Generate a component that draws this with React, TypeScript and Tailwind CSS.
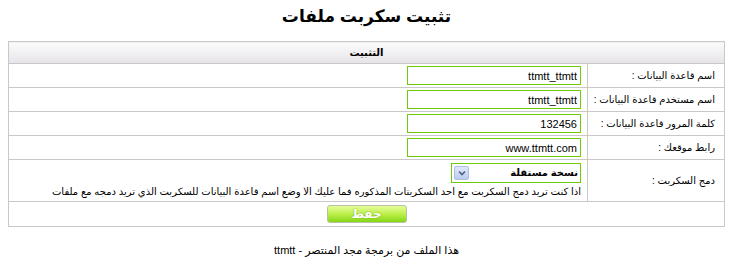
import { useState } from 'react';

const font = "font-['Tahoma','Liberation_Sans','DejaVu_Sans',sans-serif]";

export default function App() {
  const [dbName, setDbName] = useState('ttmtt_ttmtt');
  const [dbUser, setDbUser] = useState('ttmtt_ttmtt');
  const [dbPass, setDbPass] = useState('132456');
  const [siteUrl, setSiteUrl] = useState('www.ttmtt.com');
  const [merge, setMerge] = useState('standalone');

  const rows = [
    { label: 'اسم قاعدة البيانات :', value: dbName, set: setDbName },
    { label: 'اسم مستخدم قاعدة البيانات :', value: dbUser, set: setDbUser },
    { label: 'كلمة المرور قاعدة البيانات :', value: dbPass, set: setDbPass },
    { label: 'رابط موقعك :', value: siteUrl, set: setSiteUrl },
  ];

  return (
    <div dir="rtl" className={`w-[733px] h-[266px] bg-white text-black ${font}`}>
      <h1 className="text-center text-[17px] font-bold leading-none pt-[8px] h-[41px]">
        تثبيت سكربت ملفات
      </h1>

      {/* install form */}
      <table className="mx-auto w-[717px] table-fixed border-collapse border border-[#c8c8c8] text-[10px]">
        <colgroup>
          <col className="w-[137px]" />
          <col />
        </colgroup>
        <thead>
          <tr>
            <th
              colSpan={2}
              className="h-[22px] border border-[#c8c8c8] bg-gradient-to-b from-[#fbfbfc] to-[#e6e4e8] text-[10px] font-bold"
            >
              التثبيت
            </th>
          </tr>
        </thead>
        <tbody>
          {rows.map((r) => (
            <tr key={r.label} className="h-[24px]">
              <td className="whitespace-nowrap border border-[#c8c8c8] pr-[9px] text-right">{r.label}</td>
              <td className="border border-[#c8c8c8] pr-[6px]">
                <input
                  dir="ltr"
                  value={r.value}
                  onChange={(e) => r.set(e.target.value)}
                  className="block w-[174px] h-[19px] border border-[#6ccb0a] px-[3px] text-right text-[11px] outline-none"
                />
              </td>
            </tr>
          ))}
          <tr className="h-[42px]">
            <td className="whitespace-nowrap border border-[#c8c8c8] pr-[9px] text-right">دمج السكربت :</td>
            <td className="border border-[#c8c8c8] pr-[6px] pl-[6px] py-[2px]">
              <div className="relative w-[130px] h-[20px] border border-[#6ccb0a]">
                <select
                  value={merge}
                  onChange={(e) => setMerge(e.target.value)}
                  className="w-full h-full appearance-none bg-white pr-[2px] text-[10px] font-bold outline-none"
                >
                  <option value="standalone">نسخة مستقلة</option>
                </select>
                <span className="pointer-events-none absolute left-[2px] top-[2px] flex w-[15px] h-[14px] items-center justify-center rounded-[2px] border border-[#aebfe0] bg-gradient-to-b from-[#e1e9fb] to-[#bccbf0]">
                  <svg width="8" height="6" viewBox="0 0 8 6">
                    <path d="M1 1.5 L4 4.5 L7 1.5" stroke="#4d6185" strokeWidth="1.6" fill="none" />
                  </svg>
                </span>
              </div>
              <div className="mt-[1px] whitespace-nowrap leading-[15px]">
                اذا كنت تريد دمج السكربت مع احد السكربتات المذكوره فما عليك الا وضع اسم قاعدة البيانات للسكربت الذي تريد دمجه مع ملفات
              </div>
            </td>
          </tr>
          <tr className="h-[25px]">
            <td colSpan={2} className="border border-[#c8c8c8]">
              <div className="flex justify-center">
                <button className="w-[80px] h-[18px] rounded-[3px] border border-[#b9c2a8] bg-gradient-to-b from-[#e6fd96] via-[#bdf04a] to-[#86d60f] text-[12px] font-bold leading-none text-white [text-shadow:0_0_2px_#6aa80a]">
                  حفظ
                </button>
              </div>
            </td>
          </tr>
        </tbody>
      </table>

      <p className="mt-[15px] text-center text-[11px]">
        هذا الملف من برمجة مجد المنتصر - ttmtt
      </p>
    </div>
  );
}
